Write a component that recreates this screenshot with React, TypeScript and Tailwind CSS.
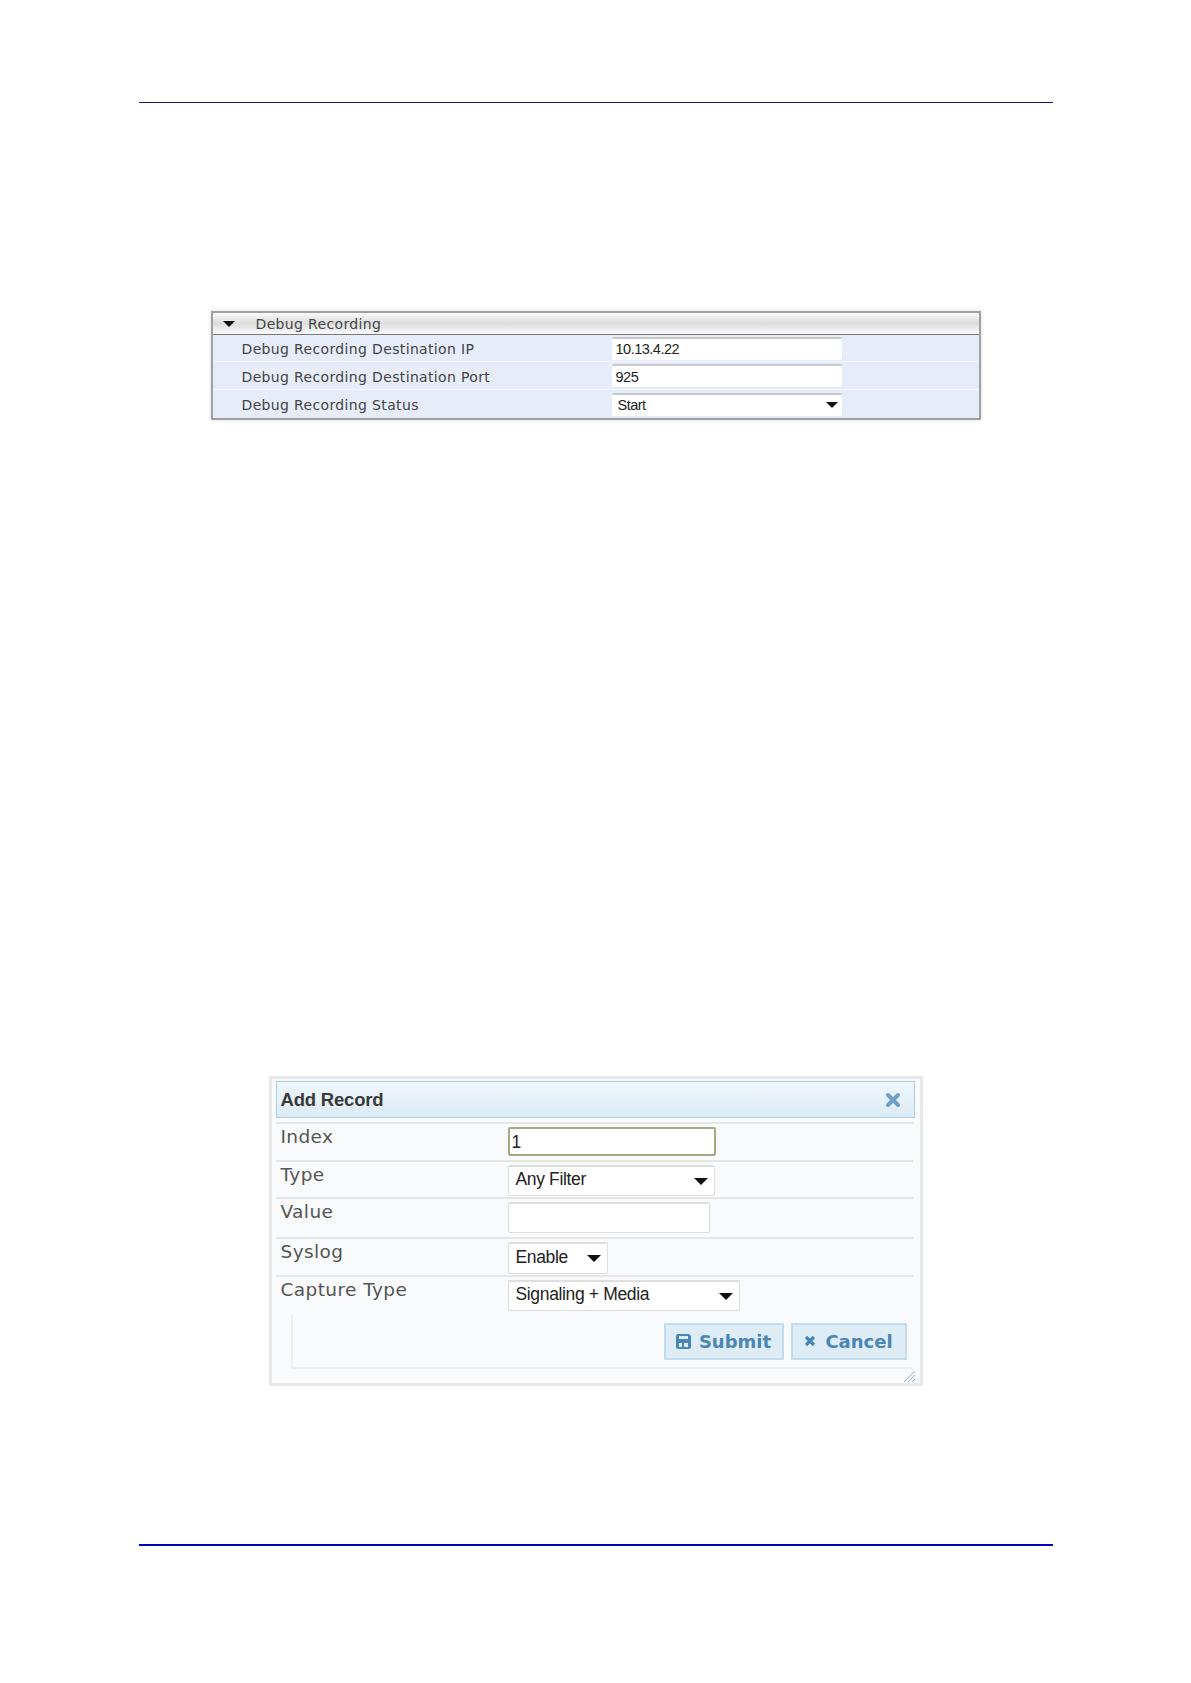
const debugRows = [
  { label: "Debug Recording Destination IP", value: "10.13.4.22", h: "h-[27px]", labelPad: "pt-[2px]" },
  { label: "Debug Recording Destination Port", value: "925", h: "h-[28px]", labelPad: "pt-[3px]" },
  { label: "Debug Recording Status", value: "Start", select: true, h: "h-[28px]", labelPad: "pt-[3px]" },
];

const recordRows = [
  { label: "Index", value: "1", width: "w-[208px]", rowH: "h-[38px]", boxH: "h-[29px]", focus: true },
  { label: "Type", value: "Any Filter", width: "w-[207px]", rowH: "h-[37px]", boxH: "h-[31px]", select: true },
  { label: "Value", value: "", width: "w-[202px]", rowH: "h-[40px]", boxH: "h-[31px]" },
  { label: "Syslog", value: "Enable", width: "w-[100px]", rowH: "h-[38px]", boxH: "h-[32px]", select: true },
  { label: "Capture Type", value: "Signaling + Media", width: "w-[232px]", rowH: "h-[35px]", boxH: "h-[31px]", select: true },
];

function Caret({ className }: { className?: string }) {
  return (
    <svg width="12" height="6" viewBox="0 0 12 6" className={className}>
      <path d="M0 0H12L6 6Z" fill="#111" />
    </svg>
  );
}

function DebugPanel() {
  return (
    <div className="mx-auto mt-[208px] w-[770px] border-2 border-[#a0a0a0] bg-[#e6ecf8] shadow-[0_0_4px_#ddd] font-['DejaVu_Sans',sans-serif] text-[14px] tracking-[0.35px] text-[#444]">
      <div className="flex h-[22px] items-center border-b border-[#777] bg-gradient-to-b from-[#fafafa] via-[#dcdcdc] to-[#fbfbfb]">
        <Caret className="ml-[10px]" />
        <span className="ml-[21px] pt-[2px]">Debug Recording</span>
      </div>
      {debugRows.map((row, i) => (
        <div
          key={row.label}
          className={`flex items-center ${row.h} ${i < 2 ? "border-b border-[#f3f6fc]" : ""}`}
        >
          <span className={`ml-[29px] w-[370px] ${row.labelPad}`}>{row.label}</span>
          <div className="flex h-[23px] w-[230px] items-center justify-between rounded-[2px] border-t-2 border-[#c9c9c9] bg-white pl-[4px] pr-[4px] font-['Liberation_Sans',sans-serif] text-[14.5px] tracking-[-0.5px] text-[#222]">
            <span className={row.select ? "pl-[2px] pt-[2px]" : "pt-[2px]"}>{row.value}</span>
            {row.select && <Caret />}
          </div>
        </div>
      ))}
    </div>
  );
}

function AddRecord() {
  return (
    <div className="mx-auto mt-[656px] flex w-[654px] flex-col border-[3px] border-[#e8e8e8] bg-[#f8fafc] pl-[4px] pr-[5px] pt-[2px] font-['DejaVu_Sans',sans-serif]">
      <div className="flex h-[37px] items-center justify-between border border-[#a9cfe6] bg-gradient-to-b from-[#f0f6fb] to-[#dcebf6] pl-[4px] pr-[13px]">
        <span className="pt-px text-[18.5px] font-bold tracking-[-0.2px] text-[#3a3a3a] font-['Liberation_Sans',sans-serif]">Add Record</span>
        <svg width="16" height="16" viewBox="0 0 16 16">
          <path d="M3 3L13 13M13 3L3 13" stroke="#6f9fc4" strokeWidth="4" strokeLinecap="round" />
        </svg>
      </div>
      <div className="mt-[4px] mr-[2px] border-t-2 border-[#e6e6e6]">
        {recordRows.map((row, i) => (
          <div
            key={row.label}
            className={`flex pt-[2px] ${row.rowH} ${i < 4 ? "border-b-2 border-[#e6e6e6]" : ""}`}
          >
            <span className="ml-[5px] w-[227px] text-[18.5px] leading-[22px] tracking-[0.4px] text-[#555]">
              {row.label}
            </span>
            <div
              className={`mt-px flex ${row.boxH} ${row.width} items-center justify-between rounded-[2px] bg-white pr-[6px] font-['Liberation_Sans',sans-serif] text-[17.5px] tracking-[-0.35px] text-[#222] ${
                row.focus
                  ? "border-2 border-[#a3ab85] pl-[2px] pt-[2px]"
                  : "border border-t-2 border-[#dedede] pl-[7px]"
              }`}
            >
              <span className={row.focus ? "" : "pb-[3px]"}>{row.value}</span>
              {row.select && <Caret className="h-[7px] w-[14px]" />}
            </div>
          </div>
        ))}
      </div>
      <div className="ml-[15px] mr-[3px] mt-[3px] flex h-[54px] items-center justify-end gap-[7px] border-b-2 border-l-2 border-[#efefef] pr-[5px]">
        <button className="flex h-[37px] w-[120px] items-center justify-center gap-[8px] border-2 border-[#c3dcec] bg-[#deecf6] text-[18px] font-bold text-[#4a86b4]">
          <svg width="15" height="15" viewBox="0 0 15 15">
            <path
              fillRule="evenodd"
              d="M2 0H13L15 2V13A2 2 0 0 1 13 15H2A2 2 0 0 1 0 13V2A2 2 0 0 1 2 0ZM3 2V5H12V2ZM3 9V13H6V9ZM8 9V13H12V9Z"
              fill="#4a86b4"
            />
          </svg>
          Submit
        </button>
        <button className="flex h-[37px] w-[116px] items-center justify-center gap-[9px] border-2 border-[#c3dcec] bg-[#deecf6] text-[18px] font-bold text-[#4a86b4]">
          <svg width="12" height="12" viewBox="0 0 12 12">
            <path d="M2 2L10 10M10 2L2 10" stroke="#4a86b4" strokeWidth="3.4" />
          </svg>
          Cancel
        </button>
      </div>
      <div className="flex h-[14px] items-center justify-end">
        <svg width="12" height="12" viewBox="0 0 12 12">
          <path d="M12 1L1 12M12 5L5 12M12 9L9 12" stroke="#8fb0c8" strokeWidth="1" />
        </svg>
      </div>
    </div>
  );
}

export default function App() {
  return (
    <div className="h-[1683px] w-[1191px] overflow-hidden bg-white">
      <div className="ml-[139px] mt-[102px] h-px w-[914px] bg-[#10109a]" />
      <DebugPanel />
      <AddRecord />
      <div className="ml-[139px] mt-[158px] h-[2px] w-[914px] bg-[#0000c0]" />
    </div>
  );
}
